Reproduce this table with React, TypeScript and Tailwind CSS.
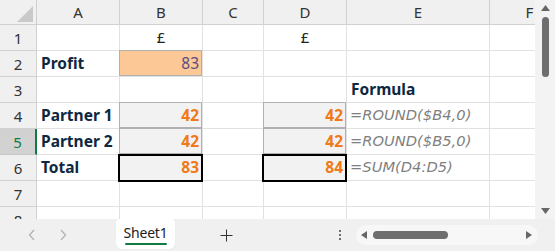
import React from "react";

const FONT = { fontFamily: '"Noto Sans", "Liberation Sans", sans-serif' };
const OBLIQUE = { fontFamily: '"DejaVu Sans", "Noto Sans", sans-serif' };

type Cell = {
  text?: string;
  kind?: "label" | "num" | "formula" | "center" | "plain";
  fill?: string;
  box?: "thin" | "thick";
};

const COLS = ["w-[37px]", "w-[83px]", "w-[83px]", "w-[61px]", "w-[83px]", "w-[143px]", "w-[80px]"];
const LETTERS = ["A", "B", "C", "D", "E", "F"];

const rows: Cell[][] = [
  [{}, { text: "£", kind: "center" }, {}, { text: "£", kind: "center" }, {}, {}],
  [{ text: "Profit", kind: "label" }, { text: "83", kind: "plain", fill: "bg-[#fbc896]", box: "thin" }, {}, {}, {}, {}],
  [{}, {}, {}, {}, { text: "Formula", kind: "label" }, {}],
  [{ text: "Partner 1", kind: "label" }, { text: "42", kind: "num", fill: "bg-[#f2f2f2]", box: "thin" }, {}, { text: "42", kind: "num", fill: "bg-[#f2f2f2]", box: "thin" }, { text: "=ROUND($B4,0)", kind: "formula" }, {}],
  [{ text: "Partner 2", kind: "label" }, { text: "42", kind: "num", fill: "bg-[#f2f2f2]", box: "thin" }, {}, { text: "42", kind: "num", fill: "bg-[#f2f2f2]", box: "thin" }, { text: "=ROUND($B5,0)", kind: "formula" }, {}],
  [{ text: "Total", kind: "label" }, { text: "83", kind: "num", fill: "bg-[#f2f2f2]", box: "thick" }, {}, { text: "84", kind: "num", fill: "bg-[#f2f2f2]", box: "thick" }, { text: "=SUM(D4:D5)", kind: "formula" }, {}],
  [{}, {}, {}, {}, {}, {}],
  [{}, {}, {}, {}, {}, {}],
];

function textClass(kind?: Cell["kind"]) {
  switch (kind) {
    case "label":
      return "justify-start pl-[4px] text-[15.5px] font-bold text-[#0e2841]";
    case "num":
      return "justify-end pr-[3px] text-[15.5px] font-bold text-[#ef7a17]";
    case "plain":
      return "justify-end pr-[3px] text-[15.5px] text-[#5a4f82]";
    case "formula":
      return "justify-start pl-[3px] text-[14.7px] italic text-[#7f7f7f]";
    case "center":
      return "justify-center text-[15px] text-[#222]";
    default:
      return "";
  }
}

function GridCell({ cell, col }: { cell: Cell; col: number }) {
  return (
    <div
      className={`relative flex shrink-0 items-center border-r border-b border-[#e1e1e1] ${COLS[col + 1]} ${cell.fill ?? "bg-white"} ${textClass(cell.kind)}`}
      style={cell.kind === "formula" ? OBLIQUE : undefined}
    >
      {cell.box === "thin" && (
        <span className="pointer-events-none absolute -left-px -top-px right-0 bottom-0 border border-[#b0b0b0]" />
      )}
      {cell.box === "thick" && (
        <span className="pointer-events-none absolute z-10 -left-[2px] -top-px -right-px -bottom-[2px] border-2 border-black" />
      )}
      <span className="relative whitespace-nowrap">{cell.text}</span>
    </div>
  );
}

function Chevron({ dir }: { dir: "left" | "right" }) {
  return (
    <svg width="8" height="12" viewBox="0 0 8 12" fill="none" stroke="#b3b3b3" strokeWidth="1.3">
      {dir === "left" ? <path d="M6 1 1.5 6 6 11" /> : <path d="M2 1 6.5 6 2 11" />}
    </svg>
  );
}

export default function App() {
  return (
    <div className="flex h-[251px] w-[555px] flex-col overflow-hidden bg-[#f0f0f0]" style={FONT}>
      {/* sheet area */}
      <div className="flex h-[219px] shrink-0">
        <div className="w-[535px] shrink-0 overflow-hidden bg-white">
          {/* column headers */}
          <div className="flex h-[25px]">
            <div className="relative w-[37px] shrink-0 border-r border-b border-[#d0d0d0] bg-[#f0f0f0]">
              <svg className="absolute left-[17px] top-[6px]" width="16" height="16" viewBox="0 0 16 16">
                <path d="M16 0V16H0Z" fill="#c9c9c9" />
              </svg>
            </div>
            {LETTERS.map((l, i) => (
              <div
                key={l}
                className={`flex shrink-0 items-center justify-center border-r border-b border-[#d0d0d0] bg-[#f0f0f0] text-[15px] text-[#333] ${COLS[i + 1]}`}
              >
                {l}
              </div>
            ))}
          </div>
          {/* rows */}
          {rows.map((r, ri) => {
            const sel = ri === 4;
            return (
              <div key={ri} className="flex h-[26px]">
                <div
                  className={`flex w-[37px] shrink-0 items-center justify-center border-b pt-[2px] text-[15px] ${
                    sel
                      ? "border-r-2 border-r-[#107c41] border-b-[#c6c6c6] bg-[#d2d2d2] text-[#107c41]"
                      : "border-r border-[#d0d0d0] bg-[#f0f0f0] text-[#333]"
                  }`}
                >
                  {ri + 1}
                </div>
                {r.map((c, ci) => (
                  <GridCell key={ci} cell={c} col={ci} />
                ))}
              </div>
            );
          })}
        </div>
        {/* vertical scrollbar */}
        <div className="flex w-[20px] shrink-0 flex-col items-center bg-[#f3f3f3] pt-[5px]">
          <svg width="9" height="6" viewBox="0 0 9 6">
            <path d="M4.5 0 9 6H0Z" fill="#666" />
          </svg>
          <div className="mt-[6px] h-[60px] w-[7px] rounded-full bg-[#6e6e6e]" />
          <div className="flex-1" />
          <svg className="mb-[5px]" width="9" height="6" viewBox="0 0 9 6">
            <path d="M0 0H9L4.5 6Z" fill="#666" />
          </svg>
        </div>
      </div>
      {/* tab bar */}
      <div className="flex h-[32px] shrink-0 items-start">
        <div className="flex h-[32px] w-[116px] shrink-0 items-center pl-[28px]">
          <Chevron dir="left" />
          <div className="w-[23px]" />
          <Chevron dir="right" />
        </div>
        <div className="relative flex h-[30px] w-[59px] shrink-0 flex-col items-center rounded-b-[6px] rounded-t-[3px] bg-white pt-[4px] shadow-[0_0_1px_rgba(0,0,0,0.08)]">
          <span className="text-[14px] leading-[20px] tracking-[-0.2px] text-[#222]">Sheet1</span>
          <div className="h-[2px] w-[42px] rounded-full bg-[#107c41]" />
        </div>
        <div className="flex h-[32px] w-[103px] shrink-0 items-center justify-center">
          <svg width="13" height="13" viewBox="0 0 13 13" stroke="#333" strokeWidth="1">
            <path d="M6.5 0.5v12M0.5 6.5h12" />
          </svg>
        </div>
        <div className="w-[57px] shrink-0" />
        <div className="flex h-[32px] w-[10px] shrink-0 flex-col items-center justify-center gap-[2px]">
          <div className="h-[2px] w-[2px] rounded-full bg-[#444]" />
          <div className="h-[2px] w-[2px] rounded-full bg-[#444]" />
          <div className="h-[2px] w-[2px] rounded-full bg-[#444]" />
        </div>
        <div className="w-[11px] shrink-0" />
        <div className="mt-[6px] flex h-[20px] w-[182px] shrink-0 items-center rounded-full bg-[#f7f7f7] pl-[5px] pr-[6px]">
          <svg width="6" height="8" viewBox="0 0 6 8">
            <path d="M6 0V8L0 4Z" fill="#666" />
          </svg>
          <div className="ml-[6px] h-[8px] w-[75px] rounded-full bg-[#6e6e6e]" />
          <div className="flex-1" />
          <svg width="6" height="8" viewBox="0 0 6 8">
            <path d="M0 0V8L6 4Z" fill="#666" />
          </svg>
        </div>
      </div>
    </div>
  );
}
